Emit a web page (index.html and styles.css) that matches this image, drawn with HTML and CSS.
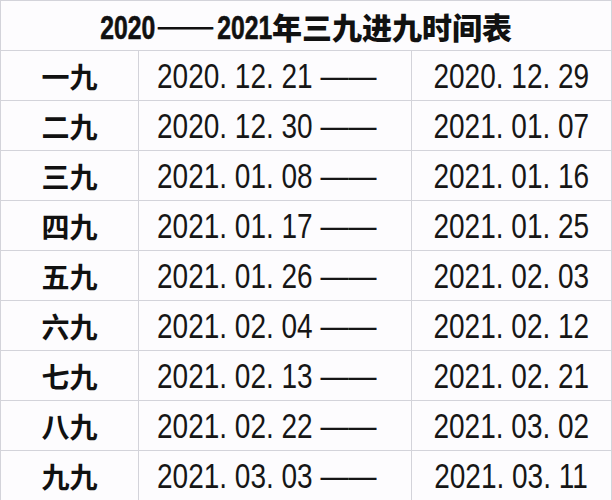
FILE: index.html
```html
<!DOCTYPE html>
<html lang="zh">
<head>
<meta charset="utf-8">
<title>2020——2021年三九进九时间表</title>
<link rel="stylesheet" href="styles.css">
</head>
<body>
<table class="schedule">
  <colgroup>
    <col class="col-name">
    <col class="col-start">
    <col class="col-end">
  </colgroup>
  <thead>
    <tr>
      <th class="title" colspan="3"><span class="num">2020</span><span class="cjk-dash">——</span><span class="num">2021</span><span class="cjk">年三九进九时间表</span></th>
    </tr>
  </thead>
  <tbody>
    <tr><td class="name">一九</td><td class="start"><span class="date">2020. 12. 21 ——</span></td><td class="end"><span class="date">2020. 12. 29</span></td></tr>
    <tr><td class="name">二九</td><td class="start"><span class="date">2020. 12. 30 ——</span></td><td class="end"><span class="date">2021. 01. 07</span></td></tr>
    <tr><td class="name">三九</td><td class="start"><span class="date">2021. 01. 08 ——</span></td><td class="end"><span class="date">2021. 01. 16</span></td></tr>
    <tr><td class="name">四九</td><td class="start"><span class="date">2021. 01. 17 ——</span></td><td class="end"><span class="date">2021. 01. 25</span></td></tr>
    <tr><td class="name">五九</td><td class="start"><span class="date">2021. 01. 26 ——</span></td><td class="end"><span class="date">2021. 02. 03</span></td></tr>
    <tr><td class="name">六九</td><td class="start"><span class="date">2021. 02. 04 ——</span></td><td class="end"><span class="date">2021. 02. 12</span></td></tr>
    <tr><td class="name">七九</td><td class="start"><span class="date">2021. 02. 13 ——</span></td><td class="end"><span class="date">2021. 02. 21</span></td></tr>
    <tr><td class="name">八九</td><td class="start"><span class="date">2021. 02. 22 ——</span></td><td class="end"><span class="date">2021. 03. 02</span></td></tr>
    <tr><td class="name">九九</td><td class="start"><span class="date">2021. 03. 03 ——</span></td><td class="end"><span class="date">2021. 03. 11</span></td></tr>
  </tbody>
</table>
</body>
</html>
```

FILE: styles.css
```css
html, body {
  margin: 0;
  padding: 0;
  background: #fdfcfe;
}

.schedule {
  border-collapse: collapse;
  table-layout: fixed;
  width: 611px;
  color: #161616;
  font-family: "Liberation Sans", Arial, "Noto Sans CJK SC", sans-serif;
}

.col-name { width: 138px; }
.col-start { width: 273px; }
.col-end { width: 200px; }

.schedule th,
.schedule td {
  border: 1px solid #d3d3da;
  padding: 0;
  height: 49px;
  white-space: nowrap;
}

/* title row */
.title {
  font-size: 30px;
  font-weight: 700;
  text-align: center;
  color: #111;
}

.title .num {
  display: inline-block;
  font-family: "Liberation Sans", Arial, sans-serif;
  font-size: 33px;
  font-weight: 700;
  transform: scaleX(0.75);
  margin: 0 -9px;
  -webkit-text-stroke: 0.6px currentColor;
}

.title .cjk,
.title .cjk-dash {
  font-family: "Noto Sans CJK SC", sans-serif;
  font-weight: 900;
}

.title .cjk-dash {
  letter-spacing: 1px;
  text-shadow: 0 1px 0 currentColor;
}

/* first column */
.name {
  font-family: "Noto Sans CJK SC", sans-serif;
  font-weight: 700;
  font-size: 28px;
  text-align: center;
  color: #111;
}

/* date columns */
.start,
.end {
  font-size: 35px;
  font-weight: 400;
}

.date {
  display: inline-block;
  transform: scaleX(0.8);
}

.start {
  text-align: left;
}

.start .date {
  transform-origin: left center;
  margin-left: 18px;
  margin-right: -56px;
}

.end {
  text-align: center;
}

.end .date {
  transform-origin: center center;
}
```
